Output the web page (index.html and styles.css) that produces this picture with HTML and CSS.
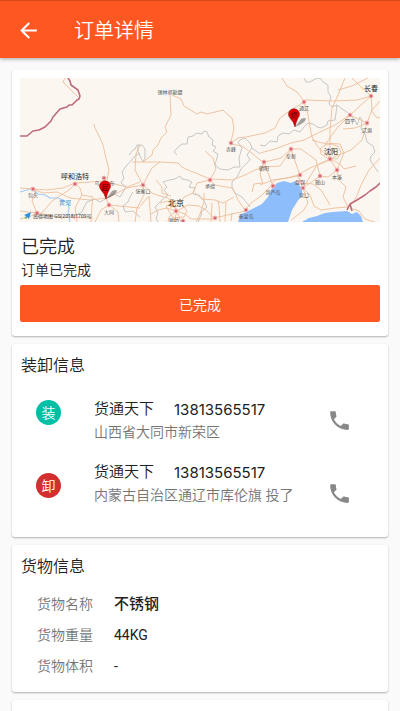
FILE: index.html
```html
<!DOCTYPE html>
<html lang="zh-CN">
<head>
<meta charset="utf-8">
<meta name="viewport" content="width=device-width, initial-scale=1">
<title>订单详情</title>
<link rel="stylesheet" href="styles.css">
</head>
<body>
<header class="app-bar">
  <button class="icon-button" type="button" aria-label="返回">
    <svg class="icon-back" viewBox="0 0 24 24" aria-hidden="true"><path d="M20 11H7.83l5.59-5.59L12 4l-8 8 8 8 1.41-1.41L7.83 13H20v-2z"/></svg>
  </button>
  <h1 class="app-title">订单详情</h1>
</header>

<main class="content">
  <section class="card">
    <svg class="map" viewBox="20 78 360 144" role="img" aria-label="地图">
      <rect class="land" x="20" y="78" width="360" height="144"/>
      <path class="sea" d="M238 222L241 214L246 212L256 207L262 204L268 197L272 188L277 183L284 181L291 183L295 181L302 188L302 195L297 202L292 210L288 222ZM302 222L309 218L317 216L325 213L333 212L347 211L352 214L357 212L361 216L363 222Z"/>
      <g class="river">
        <path d="M20 192L27 190L31 188L38 194L45 195L50 198L58 198L63 200L68 203L69 208L68 214L70 222"/>
      </g>
      <g class="region">
        <path d="M129 155L133 150L135 149L137 145L142 145L145 149L145 158L143 162L138 152L138 145M140 153L134 157L130 162L126 166L122 172L124 178L121 183L126 187L123 192L120 197L114 194L107 198L100 202L95 199L87 202L84 207L82 212L76 215L70 218"/>
        <path d="M133 192L130 197L128 202L123 206L125 212L133 211L140 217M177 155L174 152L177 148L182 144L187 144L188 137L193 136L197 133L202 134L204 131L207 132L209 137L213 140L212 145L216 147L213 151L218 154L215 165L220 169L228 170L234 167L240 167L239 158L242 148L238 142L240 140L245 138L250 143L252 148L260 154"/>
        <path d="M163 182L169 180L175 179L180 176L182 179L188 180L192 182L189 187L195 188L193 194L199 195L204 201L207 207L202 211L201 215L198 222M163 182L167 187L164 190L168 195L162 200L155 207L158 213L156 218L158 222M252 148L247 155L250 160L245 165L241 169L237 177L232 182L232 187L235 193L242 197L246 202L250 207"/>
        <path d="M304 78L306 82L310 82L315 79L320 78L323 82L328 85L328 92L331 97L329 104L332 107L337 105L336 113L335 120L328 121L327 125L321 128L317 127L313 124L308 123L304 127L300 132L294 130L289 134L283 133L278 136L277 142L270 141L265 146L260 145"/>
        <path d="M337 105L342 109L347 112L351 116L355 120L357 125L360 117L362 120L361 129L365 134L367 142L373 146L375 152L371 156L370 160L374 166L378 172"/>
      </g>
      <g class="road">
        <path d="M65 78L63 82L67 86L78 97M94 124L95 128L99 136L103 145L106 158L109 170L107 180M170 95L171 115L165 127L167 132L161 138L158 145L153 150L152 155L143 162M172 95L181 99L184 106L197 114L201 112L207 114L223 110L227 114L232 118L234 128L231 142M232 142L238 138L246 137L265 133L275 128L280 118L288 112L304 102M231 144L242 146L253 154L260 160L264 162"/>
        <path d="M282 78L287 86L297 92L304 101L308 115L310 127L312 137L318 147L330 158M305 100L333 101L357 100L371 96M345 78L338 95L332 108L330 130L330 158M352 78L360 86L371 96L350 115L337 128L325 145M338 90L352 86L360 82L368 78M371 96L372 110L367 123L350 115M371 110L376 117L380 118M367 123L355 128L343 129M372 110L380 101M260 153L275 149L291 143L304 140L320 132L335 125L350 115M367 123L362 140L351 150L336 156L330 159M312 140L322 143L340 144L344 153L337 170"/>
        <path d="M20 188L33 189L47 190L63 188L75 183L90 182L105 181L115 184L127 187L140 182M33 189L43 193L57 192L70 198L90 200L107 198L127 188L143 185M75 183L80 188L82 195L93 197L92 205L91 222M109 205L101 210L95 222M109 205L106 198L104 180M109 205L118 212L119 222M109 205L140 208M75 184L69 190L52 201L42 213L20 219M20 211L37 213L57 217L93 218M82 195L75 208L77 222M36 190L32 201L37 213"/>
        <path d="M132 162L147 162L160 162L178 163L182 167L188 170L198 174L210 179L232 180L245 175L255 170L265 167L280 166L291 150M143 185L147 177L152 168L160 162M143 185L135 170L136 154L140 145M143 185L152 193L160 196L168 198L177 210M211 178L216 169L213 158L205 151M210 180L197 183L193 193L184 197L180 203M210 180L215 185L232 188L236 195L238 200L245 210M156 180L162 187L162 193L171 196M140 206L149 196L151 222M143 185L144 195L137 208L135 222"/>
        <path d="M176 211L167 208L158 210L151 214M177 210L168 201L160 203M177 211L188 205L199 206L206 210L214 218L232 214L245 211M177 211L185 214L191 219L214 219M177 211L174 222M177 211L181 222M176 211L169 217L168 222M166 206L173 203L182 204L187 211L184 217L173 218L166 206M196 222L200 214L204 202L204 193M211 222L212 203M220 222L219 205L218 201M225 222L226 202M232 213L231 221M195 193L202 199L215 200L223 203L234 197"/>
        <path d="M260 185L273 180L287 178L298 175L310 168L330 160M245 210L251 203L261 196L270 187L275 180L298 176L303 188L317 165L330 159M264 162L273 186M264 162L260 174L263 184M291 149L295 161L300 175M291 149L301 149L316 160L320 176L303 188M303 183L313 184L321 190L326 198L330 205M303 188L310 195L314 206L321 210L335 208L348 207M337 170L339 180L346 187L343 197L348 207M337 170L330 159M350 206L356 198L361 185L369 170L380 158M330 159L340 164L344 169L356 166M320 176L328 177L337 170M303 188L308 203L303 211L291 220M350 208L359 211L365 219L375 222M325 145L320 149L321 154L327 158L337 159L341 153L339 147L332 144L325 145M260 170L265 162L281 158L291 149M252 192L254 184L262 183"/>
      </g>
      <path class="border" d="M20 136L27 136L33 131L39 130L45 127L51 121L53 117L60 109L67 107L69 105L72 105L77 100L79 99L80 96L78 90L71 85L70 81L68 78M380 183L376 187L370 191L365 195L357 200L350 204L347 210M350 204L352 211"/>
      <g class="city">
        <circle cx="231" cy="143" r="2"/><circle cx="304" cy="102" r="2"/><circle cx="371" cy="96" r="2"/><circle cx="350" cy="115" r="2"/><circle cx="367" cy="123" r="2"/><circle cx="291" cy="149" r="2"/><circle cx="330" cy="159" r="2"/><circle cx="264" cy="162" r="2"/><circle cx="273" cy="186" r="2"/><circle cx="300" cy="175" r="2"/><circle cx="320" cy="176" r="2"/><circle cx="303" cy="188" r="2"/><circle cx="337" cy="170" r="2"/><circle cx="75" cy="184" r="2"/><circle cx="33" cy="189" r="2"/><circle cx="104" cy="178" r="2"/><circle cx="109" cy="205" r="2"/><circle cx="143" cy="185" r="2"/><circle cx="210" cy="180" r="2"/><circle cx="176" cy="211" r="2"/><circle cx="183" cy="221" r="2"/><circle cx="215" cy="218" r="2"/><circle cx="246" cy="210" r="2"/><circle cx="37" cy="213" r="2"/>
      </g>
      <g class="place">
        <text x="170" y="94">锡林郭勒盟</text><text x="231" y="151">赤峰</text><text x="304" y="110">通辽</text><text x="350" y="123">四平</text><text x="367" y="132">辽源</text><text x="291" y="158">阜新</text><text x="264" y="170">朝阳</text><text x="273" y="194">葫芦岛</text><text x="300" y="184">盘锦</text><text x="320" y="184">鞍山</text><text x="304" y="197">营口</text><text x="337" y="179">本溪</text><text x="33" y="197">包头</text><text x="97" y="185">乌</text><text x="112" y="185">布</text><text x="109" y="214">大同</text><text x="143" y="193">张家口</text><text x="210" y="188">承德</text><text x="174" y="222">廊坊</text><text x="246" y="218">秦皇岛</text>
      </g>
      <g class="place place-major">
        <text x="371" y="91">长春</text><text x="331" y="154">沈阳</text><text x="75" y="179">呼和浩特</text>
      </g>
      <text class="place place-capital" x="176" y="206">北京</text>
      <text class="place place-river" x="65" y="205">黄河</text>
      <path class="logo-plane" d="M24 215L31 212L29 219L27 217L25 218L26 216Z"/>
      <path class="logo-tail" d="M24 218L26 217L27 219Z"/>
      <text class="credit" x="33" y="218">高德地图 GS(2018)1709号</text>
      <g class="pin">
        <path class="pin-shadow" d="M106 199L112 191Q116 189 117 191Q116 195 106 199Z"/>
        <path class="pin-body" d="M106 199Q105 194 101 190A5.5 5.5 0 1 1 109 190Q107 194 106 199Z"/>
        <text x="105" y="190">起</text>
        <path class="pin-shadow" d="M295 127L301 119Q305 117 306 119Q305 123 295 127Z"/>
        <path class="pin-body" d="M295 127Q294 122 290 118A5.5 5.5 0 1 1 298 118Q296 122 295 127Z"/>
        <text x="294" y="118">终</text>
      </g>
    </svg>
    <h2 class="status-title">已完成</h2>
    <p class="status-text">订单已完成</p>
    <button class="primary-button" type="button">已完成</button>
  </section>

  <section class="card card-stops">
    <h2 class="card-title">装卸信息</h2>
    <ul class="stops">
      <li class="stop">
        <span class="badge badge-load">装</span>
        <div class="stop-info">
          <p class="contact"><span>货通天下</span><span class="phone">13813565517</span></p>
          <p class="address">山西省大同市新荣区</p>
        </div>
        <button class="icon-button" type="button" aria-label="拨打电话">
          <svg class="icon-call" viewBox="0 0 24 24" aria-hidden="true"><path d="M6.62 10.79c1.44 2.83 3.76 5.14 6.59 6.59l2.2-2.2c.27-.27.67-.36 1.02-.24 1.12.37 2.33.57 3.57.57.55 0 1 .45 1 1V20c0 .55-.45 1-1 1-9.39 0-17-7.61-17-17 0-.55.45-1 1-1h3.5c.55 0 1 .45 1 1 0 1.25.2 2.45.57 3.57.11.35.03.74-.25 1.02l-2.2 2.2z"/></svg>
        </button>
      </li>
      <li class="stop">
        <span class="badge badge-unload">卸</span>
        <div class="stop-info stop-info-top">
          <p class="contact"><span>货通天下</span><span class="phone">13813565517</span></p>
          <p class="address">内蒙古自治区通辽市库伦旗 投了</p>
        </div>
        <button class="icon-button" type="button" aria-label="拨打电话">
          <svg class="icon-call" viewBox="0 0 24 24" aria-hidden="true"><path d="M6.62 10.79c1.44 2.83 3.76 5.14 6.59 6.59l2.2-2.2c.27-.27.67-.36 1.02-.24 1.12.37 2.33.57 3.57.57.55 0 1 .45 1 1V20c0 .55-.45 1-1 1-9.39 0-17-7.61-17-17 0-.55.45-1 1-1h3.5c.55 0 1 .45 1 1 0 1.25.2 2.45.57 3.57.11.35.03.74-.25 1.02l-2.2 2.2z"/></svg>
        </button>
      </li>
    </ul>
  </section>

  <section class="card card-goods">
    <h2 class="card-title">货物信息</h2>
    <dl class="goods">
      <dt>货物名称</dt><dd class="strong">不锈钢</dd>
      <dt>货物重量</dt><dd>44KG</dd>
      <dt>货物体积</dt><dd>-</dd>
    </dl>
  </section>

  <section class="card card-next"></section>
</main>
</body>
</html>
```
FILE: styles.css
```css
* {
  box-sizing: border-box;
}

html {
  height: 100%;
}

body {
  margin: 0;
  height: 100%;
  display: flex;
  flex-direction: column;
  overflow: hidden;
  background: #fafafa;
  color: #212121;
  font-family: Roboto, "Noto Sans CJK SC", sans-serif;
  font-weight: 350;
}

h1, h2, p, ul, dl, dd {
  margin: 0;
  padding: 0;
  font-weight: inherit;
}

button {
  border: 0;
  padding: 0;
  font: inherit;
}

.app-bar {
  position: relative;
  flex: none;
  display: flex;
  align-items: center;
  gap: 33px;
  height: 58px;
  padding: 2px 16px 0;
  border-top: 1px solid #d9481b;
  background: #ff5722;
  color: #fff;
  box-shadow: 0 1px 4px rgba(0, 0, 0, 0.35);
}

.app-title {
  font-size: 20px;
  line-height: 28px;
}

.icon-button {
  display: flex;
  background: none;
}

.icon-back {
  width: 25px;
  height: 25px;
  fill: #fff;
}

.icon-call {
  width: 25px;
  height: 25px;
  fill: #888;
}

.content {
  flex: 1;
  min-height: 0;
  overflow: hidden;
  display: flex;
  flex-direction: column;
  gap: 8px;
  padding: 12px 12px 0;
}

.card {
  flex: none;
  padding: 8px 8px 14px;
  border-radius: 3px;
  background: #fff;
  box-shadow: 0 1px 2px rgba(0, 0, 0, 0.3);
}

.card-next {
  height: 80px;
}

.status-title {
  margin-top: 12px;
  padding-left: 1px;
  font-size: 18px;
  line-height: 26px;
}

.status-text {
  padding-left: 1px;
  font-size: 14px;
  line-height: 20px;
}

.primary-button {
  display: block;
  width: 100%;
  height: 37px;
  margin-top: 5px;
  border-radius: 2px;
  background: #ff5722;
  color: #fff;
  font-size: 14px;
}

.card-title {
  padding-left: 1px;
  font-size: 16px;
  line-height: 28px;
}

.card-stops {
  padding-bottom: 11px;
}

.stops {
  display: grid;
  gap: 8px;
  margin-top: 8px;
  padding: 0 28px 0 16px;
  list-style: none;
}

.stop {
  display: flex;
  align-items: center;
  min-height: 65px;
}

.badge {
  flex: none;
  display: grid;
  place-items: center;
  width: 25px;
  height: 25px;
  margin-bottom: 16px;
  border-radius: 50%;
  color: #fff;
  font-size: 14px;
  line-height: 20px;
}

.badge-load {
  background: #00bfa5;
}

.badge-unload {
  background: #d32f2f;
}

.stop-info {
  flex: 1;
  min-width: 0;
  margin-left: 33px;
}

.stop-info-top {
  align-self: flex-start;
}

.contact {
  display: flex;
  gap: 20px;
  font-size: 15px;
  line-height: 23px;
}

.phone {
  font-family: Inter, Roboto, sans-serif;
  font-weight: 400;
}

.address {
  color: #757575;
  font-size: 14px;
  line-height: 23px;
}

.goods {
  display: grid;
  grid-template-columns: 77px 1fr;
  row-gap: 7px;
  margin-top: 11px;
  padding-left: 17px;
  font-size: 14px;
  line-height: 24px;
}

.goods dt {
  color: #757575;
}

.goods dd {
  font-weight: 400;
}

.goods .strong {
  font-size: 15px;
  font-weight: 500;
}

.map {
  display: block;
  width: 100%;
}

.land {
  fill: #fbf7f0;
}

.sea {
  fill: #8dbdfb;
}

.map path {
  stroke-linejoin: round;
}

.river path {
  fill: none;
  stroke: #a2cbf5;
  stroke-width: 1.2;
}

.region path {
  fill: none;
  stroke: #bfc1c1;
  stroke-width: 0.9;
}

.road path {
  fill: none;
  stroke: #ecbd9b;
  stroke-width: 0.9;
}

.border {
  fill: none;
  stroke: #bf6b7b;
  stroke-width: 1.6;
}

.city circle {
  fill: #d9646c;
  stroke: #f3bcbc;
  stroke-width: 1;
}

.place {
  fill: #555;
  font-size: 5px;
  font-weight: 400;
  text-anchor: middle;
}

.place-major {
  fill: #222;
  font-size: 7px;
}

.place-capital {
  fill: #222;
  font-size: 8px;
}

.place-river {
  fill: #4f8fd0;
  font-size: 6px;
}

.credit {
  fill: #333;
  font-size: 5px;
  font-weight: 400;
}

.logo-plane {
  fill: #2f8fdb;
}

.logo-tail {
  fill: #4caf50;
}

.pin-body {
  fill: #e00008;
  stroke: #8a0006;
  stroke-width: 0.5;
}

.pin-shadow {
  fill: rgba(0, 0, 0, 0.35);
}

.pin text {
  fill: #4a0003;
  font-size: 7px;
  font-weight: 400;
  text-anchor: middle;
}
```
